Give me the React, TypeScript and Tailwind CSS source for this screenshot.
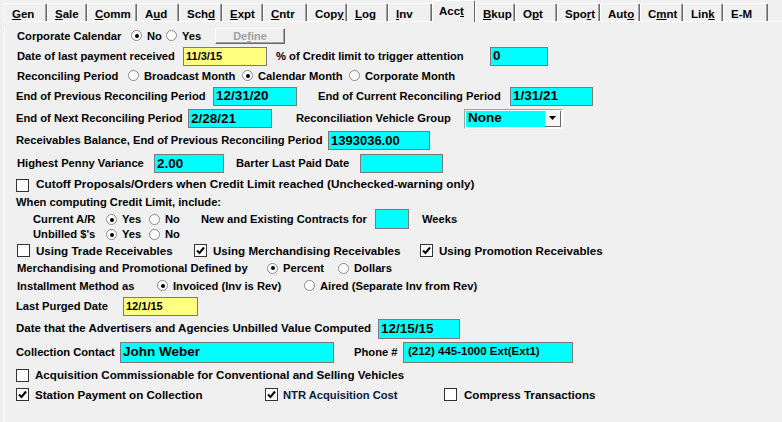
import React from 'react';

type Tab = { a: string; u: string; b: string; w: string; active?: boolean };

const tabs: Tab[] = [
  { a: '', u: 'G', b: 'en', w: 'w-[43px]' },
  { a: '', u: 'S', b: 'ale', w: 'w-[40px]' },
  { a: '', u: 'C', b: 'omm', w: 'w-[50px]' },
  { a: 'A', u: 'u', b: 'd', w: 'w-[42px]' },
  { a: 'Sch', u: 'd', b: '', w: 'w-[43px]' },
  { a: '', u: 'E', b: 'xpt', w: 'w-[41px]' },
  { a: '', u: 'C', b: 'ntr', w: 'w-[44px]' },
  { a: 'Cop', u: 'y', b: '', w: 'w-[40px]' },
  { a: '', u: 'L', b: 'og', w: 'w-[41px]' },
  { a: '', u: 'I', b: 'nv', w: 'w-[44px]' },
  { a: 'Acc', u: 't', b: '', w: 'w-[43px]', active: true },
  { a: '', u: 'B', b: 'kup', w: 'w-[40px]' },
  { a: 'O', u: 'p', b: 't', w: 'w-[42px]' },
  { a: 'Spo', u: 'r', b: 't', w: 'w-[43px]' },
  { a: 'Aut', u: 'o', b: '', w: 'w-[40px]' },
  { a: 'C', u: 'm', b: 'nt', w: 'w-[43px]' },
  { a: 'Lin', u: 'k', b: '', w: 'w-[40px]' },
  { a: 'E-M', u: '', b: '', w: 'w-[45px]' },
];

const Radio = ({ on }: { on?: boolean }) => (
  <span className="flex w-[11px] h-[11px] shrink-0 items-center justify-center rounded-full border border-[#8a8a8a] bg-white">
    {on && <span className="w-[4px] h-[4px] rounded-full bg-black" />}
  </span>
);

const RadioOpt = ({ on, label, className = '' }: { on?: boolean; label: string; className?: string }) => (
  <div className={`flex shrink-0 items-center ${className}`}>
    <Radio on={on} />
    <span className="ml-[5px] whitespace-nowrap">{label}</span>
  </div>
);

const Check = ({ on }: { on?: boolean }) => (
  <span className="flex w-[13px] h-[13px] shrink-0 items-center justify-center border border-[#333] bg-white">
    {on && (
      <svg width="9" height="9" viewBox="0 0 9 9">
        <polyline points="1,4.5 3.5,7 8,1.5" fill="none" stroke="#000" strokeWidth="2" />
      </svg>
    )}
  </span>
);

const CheckOpt = ({ on, label, className = '', gap = 'ml-[6px]' }: { on?: boolean; label: string; className?: string; gap?: string }) => (
  <div className={`flex shrink-0 items-center ${className}`}>
    <Check on={on} />
    <span className={`${gap} whitespace-nowrap`}>{label}</span>
  </div>
);

const Field = ({ className, text = '', textCls = 'text-[13.5px]' }: { className: string; text?: string; textCls?: string }) => (
  <div className={`flex shrink-0 items-center border border-[#7a7a7a] pl-[2px] font-bold leading-none text-black ${className}`}>
    <span className={`whitespace-nowrap ${textCls}`}>{text}</span>
  </div>
);

const Lbl = ({ className = '', children }: { className?: string; children: React.ReactNode }) => (
  <div className={`shrink-0 whitespace-nowrap ${className}`}>{children}</div>
);

export default function App() {
  return (
    <div className="w-[782px] h-[422px] overflow-hidden bg-[#f0f0f0] font-['Liberation_Sans',Arial,sans-serif] text-[11.2px] font-bold text-black">
      {/* tab strip */}
      <div className="flex h-[22px] items-end">
        <div className="w-[4px] shrink-0" />
        {tabs.map((t, i) =>
          t.active ? (
            <div key={i} className={`${t.w} h-[22px] shrink-0 border-l border-t border-white pl-[6px] pt-[2px] shadow-[inset_-1px_0_0_#696969] text-[11.5px]`}>
              {t.a}
              <u>{t.u}</u>
              {t.b}
            </div>
          ) : (
            <div key={i} className={`${t.w} h-[19px] shrink-0 border-b border-l border-t border-white pl-[7px] pt-[2px] shadow-[inset_-1px_0_0_#696969,inset_-2px_0_0_#a0a0a0] text-[11.5px]`}>
              {t.a}
              {t.u && <u>{t.u}</u>}
              {t.b}
            </div>
          )
        )}
        <div className="h-[1px] flex-1 bg-white" />
      </div>

      {/* panel */}
      <div className="ml-[4px] h-[400px] border-l border-white pl-[11px]">
        {/* Corporate calendar */}
        <div className="mt-[5px] flex h-[18px] items-center">
          <Lbl className="ml-[1px] w-[114px]">Corporate Calendar</Lbl>
          <RadioOpt on label="No" className="w-[35px]" />
          <RadioOpt label="Yes" className="w-[49px]" />
          <div className="flex h-[16px] w-[70px] items-center justify-center border-b border-l border-r border-t border-b-[#696969] border-l-white border-r-[#696969] border-t-white text-[11px] text-[#a0a0a0] shadow-[inset_-1px_-1px_0_#a0a0a0]">
            De<u>f</u>ine
          </div>
        </div>

        <div className="mt-[1px] flex h-[20px] items-center">
          <Lbl className="ml-[1px] w-[166px]">Date of last payment received</Lbl>
          <Field className="h-[19px] w-[84px] bg-[#ffff80]" text="11/3/15" textCls="text-[11px]" />
          <Lbl className="w-[223px] pl-[9px]">% of Credit limit to trigger attention</Lbl>
          <Field className="h-[19px] w-[58px] bg-[#00ffff]" text="0" />
        </div>

        <div className="flex h-[20px] items-center">
          <Lbl className="ml-[1px] w-[111px]">Reconciling Period</Lbl>
          <RadioOpt label="Broadcast Month" className="w-[114px]" />
          <RadioOpt on label="Calendar Month" className="w-[107px]" />
          <RadioOpt label="Corporate Month" />
        </div>

        <div className="flex h-[20px] items-center">
          <Lbl className="w-[197px]">End of Previous Reconciling Period</Lbl>
          <Field className="h-[19px] w-[84px] bg-[#00ffff]" text="12/31/20" />
          <Lbl className="w-[213px] pl-[21px]">End of Current Reconciling Period</Lbl>
          <Field className="h-[19px] w-[83px] bg-[#00ffff]" text="1/31/21" />
        </div>

        <div className="mt-[2px] flex h-[21px] items-center">
          <Lbl className="w-[172px]">End of Next Reconciling Period</Lbl>
          <Field className="h-[19px] w-[84px] bg-[#00ffff]" text="2/28/21" />
          <Lbl className="w-[192px] pl-[24px]">Reconciliation Vehicle Group</Lbl>
          <div className="flex h-[20px] w-[99px] shrink-0 items-stretch border border-b-white border-l-[#a0a0a0] border-r-white border-t-[#a0a0a0] bg-white p-[1px]">
            <div className="flex flex-1 items-center bg-[#00ffff] pl-[2px] text-[13.5px]">None</div>
            <div className="flex w-[16px] items-center justify-center border-b border-r border-b-[#696969] border-r-[#696969] bg-[#f6f6f6]">
              <svg width="7" height="4" viewBox="0 0 7 4">
                <polygon points="0,0 7,0 3.5,4" fill="#000" />
              </svg>
            </div>
          </div>
        </div>

        <div className="mt-[1px] flex h-[21px] items-center">
          <Lbl className="w-[312px]">Receivables Balance, End of Previous Reconciling Period</Lbl>
          <Field className="h-[19px] w-[102px] bg-[#00ffff]" text="1393036.00" textCls="text-[13px]" />
        </div>

        <div className="mt-[2px] flex h-[21px] items-center">
          <Lbl className="ml-[1px] w-[137px]">Highest Penny Variance</Lbl>
          <Field className="h-[19px] w-[70px] bg-[#00ffff]" text="2.00" />
          <Lbl className="w-[136px] pl-[12px]">Barter Last Paid Date</Lbl>
          <Field className="h-[19px] w-[83px] bg-[#00ffff]" />
        </div>

        <div className="mt-[2px] flex h-[18px] items-center">
          <CheckOpt label="Cutoff Proposals/Orders when Credit Limit reached (Unchecked-warning only)" gap="ml-[7px]" className="text-[11.8px]" />
        </div>

        <div className="mt-[2px] flex h-[13px] items-center">
          <Lbl>When computing Credit Limit, include:</Lbl>
        </div>

        <div className="flex h-[34px] items-start">
          <div className="w-[185px] shrink-0 pl-[17px] pt-[3px]">
            <div className="flex h-[15px] items-center">
              <Lbl className="w-[73px]">Current A/R</Lbl>
              <RadioOpt on label="Yes" className="w-[43px]" />
              <RadioOpt label="No" />
            </div>
            <div className="flex h-[15px] items-center">
              <Lbl className="w-[73px]">Unbilled $&apos;s</Lbl>
              <RadioOpt on label="Yes" className="w-[43px]" />
              <RadioOpt label="No" />
            </div>
          </div>
          <div className="flex h-[20px] items-center">
            <Lbl className="w-[174px]">New and Existing Contracts for</Lbl>
            <Field className="h-[20px] w-[34px] bg-[#00ffff]" />
            <Lbl className="ml-[13px]">Weeks</Lbl>
          </div>
        </div>

        <div className="flex h-[15px] items-center text-[11.6px]">
          <CheckOpt label="Using Trade Receivables" className="ml-[1px] w-[177px]" />
          <CheckOpt on label="Using Merchandising Receivables" className="w-[226px]" />
          <CheckOpt on label="Using Promotion Receivables" />
        </div>

        <div className="mt-[2px] flex h-[17px] items-center">
          <Lbl className="ml-[1px] w-[250px]">Merchandising and Promotional Defined by</Lbl>
          <RadioOpt on label="Percent" className="w-[71px]" />
          <RadioOpt label="Dollars" />
        </div>

        <div className="flex h-[18px] items-center">
          <Lbl className="ml-[1px] w-[140px]">Installment Method as</Lbl>
          <RadioOpt on label="Invoiced (Inv is Rev)" className="w-[147px]" />
          <RadioOpt label="Aired (Separate Inv from Rev)" />
        </div>

        <div className="mt-[1px] flex h-[21px] items-center">
          <Lbl className="w-[107px]">Last Purged Date</Lbl>
          <Field className="h-[19px] w-[75px] bg-[#ffff80]" text="12/1/15" textCls="text-[11px]" />
        </div>

        <div className="mt-[1px] flex h-[22px] items-center">
          <Lbl className="w-[362px] text-[11.5px]">Date that the Advertisers and Agencies Unbilled Value Computed</Lbl>
          <Field className="h-[20px] w-[82px] bg-[#00ffff]" text="12/15/15" />
        </div>

        <div className="mt-[1px] flex h-[22px] items-center">
          <Lbl className="w-[104px]">Collection Contact</Lbl>
          <Field className="h-[21px] w-[214px] bg-[#00ffff]" text="John Weber" />
          <Lbl className="w-[69px] pl-[20px]">Phone #</Lbl>
          <Field className="h-[21px] w-[170px] bg-[#00ffff] pl-[4px]" text="(212) 445-1000 Ext(Ext1)" textCls="text-[11.5px]" />
        </div>

        <div className="mt-[4px] flex h-[16px] items-center text-[11.6px]">
          <CheckOpt label="Acquisition Commissionable for Conventional and Selling Vehicles" />
        </div>

        <div className="mt-[3px] flex h-[18px] items-center text-[11.6px]">
          <CheckOpt on label="Station Payment on Collection" className="w-[249px]" />
          <CheckOpt on label="NTR Acquisition Cost" className="w-[179px] text-[11.2px] text-[#0a1a40]" gap="ml-[5px]" />
          <CheckOpt label="Compress Transactions" gap="ml-[7px]" />
        </div>
      </div>
    </div>
  );
}
